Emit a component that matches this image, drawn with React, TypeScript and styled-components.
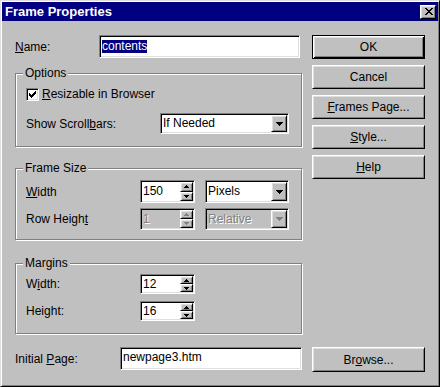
import React from "react";
import styled, { createGlobalStyle, css } from "styled-components";

const Global = createGlobalStyle`
  html, body { margin: 0; padding: 0; background: #c0c0c0; }
  body {
    font-family: "Liberation Sans", Arial, sans-serif;
    font-size: 12px;
    color: #000;
  }
  * { box-sizing: border-box; }
`;

const Window = styled.div`
  width: 440px;
  height: 387px;
  background: #c0c0c0;
  border: 1px solid;
  border-color: #dfdfdf #000 #000 #dfdfdf;
  box-shadow: inset 1px 1px #fff, inset -1px -1px #808080;
  padding: 1px;
  display: flex;
  flex-direction: column;
  overflow: hidden;
`;

const TitleBar = styled.div`
  flex: none;
  height: 19px;
  background: #000080;
  color: #fff;
  font-weight: bold;
  font-size: 13px;
  display: flex;
  align-items: center;
  justify-content: space-between;
  padding: 0 2px 0 3px;
`;

const raised = css`
  background: #c0c0c0;
  border: 1px solid;
  border-color: #fff #000 #000 #fff;
  box-shadow: inset 1px 1px #dfdfdf, inset -1px -1px #808080;
`;

const CloseButton = styled.div`
  ${raised};
  width: 16px;
  height: 14px;
  display: flex;
  align-items: center;
  justify-content: center;
  padding-left: 1px;
`;

const Body = styled.div`
  flex: none;
  display: grid;
  grid-template-columns: 287px 113px;
  column-gap: 10px;
  row-gap: 13px;
  align-items: start;
  padding: 14px 13px 0 13px;
`;

const LeftColumn = styled.div`
  display: flex;
  flex-direction: column;
`;

const ButtonColumn = styled.div`
  display: flex;
  flex-direction: column;
  gap: 6px;
`;

const Button = styled.button<{ $default?: boolean; $h?: number }>`
  ${raised};
  width: 113px;
  height: ${(p) => p.$h ?? 24}px;
  margin: 0;
  padding: 0;
  font: inherit;
  color: #000;
  ${(p) =>
    p.$default &&
    css`
      border-color: #000;
      box-shadow: inset 1px 1px #fff, inset -1px -1px #000,
        inset 2px 2px #dfdfdf, inset -2px -2px #808080;
    `}
`;

const U = styled.span`
  text-decoration: underline;
  text-underline-offset: 1px;
`;

const Row = styled.div<{ $h: number }>`
  display: flex;
  align-items: center;
  height: ${(p) => p.$h}px;
`;

const Label = styled.div<{ $w: number }>`
  width: ${(p) => p.$w}px;
  flex: none;
  white-space: nowrap;
`;

const GroupBox = styled.div<{ $top: number; $pb: number }>`
  margin-top: ${(p) => p.$top}px;
  border: 1px solid #808080;
  box-shadow: inset 1px 1px #fff, 1px 1px #fff;
  padding: 0 10px ${(p) => p.$pb}px 10px;
  display: flex;
  flex-direction: column;
`;

const Legend = styled.div`
  align-self: flex-start;
  margin: -8px 0 0 -3px;
  padding: 0 2px;
  line-height: 14px;
  height: 14px;
  background: #c0c0c0;
  white-space: nowrap;
`;

const GroupContent = styled.div<{ $pt: number; $gap: number }>`
  display: flex;
  flex-direction: column;
  gap: ${(p) => p.$gap}px;
  margin-top: ${(p) => p.$pt}px;
`;

const Field = styled.div<{ $w: number; $h: number; $disabled?: boolean }>`
  width: ${(p) => p.$w}px;
  height: ${(p) => p.$h}px;
  flex: none;
  display: flex;
  align-items: center;
  background: ${(p) => (p.$disabled ? "#c0c0c0" : "#fff")};
  color: ${(p) => (p.$disabled ? "#808080" : "#000")};
  text-shadow: ${(p) => (p.$disabled ? "1px 1px #fff" : "none")};
  border: 1px solid;
  border-color: #808080 #fff #fff #808080;
  box-shadow: inset 1px 1px #000, inset -1px -1px #dfdfdf;
  padding: 1px;
  white-space: nowrap;
`;

const FieldText = styled.span<{ $pb?: number }>`
  flex: 1;
  padding-left: 1px;
  padding-bottom: ${(p) => p.$pb ?? 1}px;
  line-height: 14px;
  overflow: hidden;
`;

const Selected = styled.span`
  background: #000080;
  color: #fff;
  line-height: 13px;
  display: inline-block;
`;

const DropButton = styled.div`
  ${raised};
  width: 16px;
  height: 100%;
  flex: none;
  display: flex;
  align-items: center;
  justify-content: center;
`;

const SpinColumn = styled.div`
  width: 13px;
  height: 100%;
  flex: none;
  display: flex;
  flex-direction: column;
`;

const SpinButton = styled.div`
  ${raised};
  flex: 1;
  display: flex;
  align-items: center;
  justify-content: center;
`;

const CheckBox = styled.div`
  width: 13px;
  height: 13px;
  flex: none;
  background: #fff;
  border: 1px solid;
  border-color: #808080 #fff #fff #808080;
  box-shadow: inset 1px 1px #000, inset -1px -1px #dfdfdf;
  display: flex;
  align-items: center;
  justify-content: center;
`;

const CheckLabel = styled.span`
  margin-left: 3px;
  white-space: nowrap;
`;

const Spacer = styled.div<{ $w: number }>`
  width: ${(p) => p.$w}px;
  flex: none;
`;

const Pixels = ({ rows, color }: { rows: string[]; color: string }) => (
  <svg
    width={rows[0].length}
    height={rows.length}
    shapeRendering="crispEdges"
    style={{ display: "block" }}
  >
    {rows.flatMap((r, y) =>
      r
        .split("")
        .map((c, x) =>
          c === "X" ? (
            <rect key={`${x}-${y}`} x={x} y={y} width={1} height={1} fill={color} />
          ) : null
        )
    )}
  </svg>
);

const CLOSE = [
  "XX....XX",
  ".XX..XX.",
  "..XXXX..",
  "...XX...",
  "..XXXX..",
  ".XX..XX.",
  "XX....XX",
];
const CHECK = [
  "......X",
  ".....XX",
  "X...XXX",
  "XX.XXX.",
  "XXXXX..",
  ".XXX...",
  "..X....",
];
const DOWN = ["XXXXXXX", ".XXXXX.", "..XXX..", "...X..."];
const SPIN_UP = ["..X..", ".XXX.", "XXXXX"];
const SPIN_DOWN = ["XXXXX", ".XXX.", "..X.."];

const Select = ({
  w,
  h,
  value,
  disabled,
}: {
  w: number;
  h: number;
  value: string;
  disabled?: boolean;
}) => (
  <Field $w={w} $h={h} $disabled={disabled}>
    <FieldText>{value}</FieldText>
    <DropButton>
      <Pixels rows={DOWN} color={disabled ? "#808080" : "#000"} />
    </DropButton>
  </Field>
);

const Spinner = ({
  h,
  value,
  disabled,
}: {
  h: number;
  value: string;
  disabled?: boolean;
}) => (
  <Field $w={55} $h={h} $disabled={disabled}>
    <FieldText>{value}</FieldText>
    <SpinColumn>
      <SpinButton>
        <Pixels rows={SPIN_UP} color={disabled ? "#808080" : "#000"} />
      </SpinButton>
      <SpinButton>
        <Pixels rows={SPIN_DOWN} color={disabled ? "#808080" : "#000"} />
      </SpinButton>
    </SpinColumn>
  </Field>
);

export default function App() {
  return (
    <>
      <Global />
      <Window>
        <TitleBar>
          <span>Frame Properties</span>
          <CloseButton>
            <Pixels rows={CLOSE} color="#000" />
          </CloseButton>
        </TitleBar>
        <Body>
          <LeftColumn>
            <Row $h={23}>
              <Label $w={84}>
                <U>N</U>ame:
              </Label>
              <Field $w={201} $h={23}>
                <FieldText $pb={2}>
                  <Selected>contents</Selected>
                </FieldText>
              </Field>
            </Row>

            <GroupBox $top={15} $pb={12}>
              <Legend>Options</Legend>
              <GroupContent $pt={6} $gap={11}>
                <Row $h={16}>
                  <CheckBox>
                    <Pixels rows={CHECK} color="#000" />
                  </CheckBox>
                  <CheckLabel>
                    <U>R</U>esizable in Browser
                  </CheckLabel>
                </Row>
                <Row $h={21}>
                  <Label $w={134}>
                    Show Scroll<U>b</U>ars:
                  </Label>
                  <Select w={129} h={21} value="If Needed" />
                </Row>
              </GroupContent>
            </GroupBox>

            <GroupBox $top={21} $pb={9}>
              <Legend>Frame Size</Legend>
              <GroupContent $pt={5} $gap={5}>
                <Row $h={23}>
                  <Label $w={114}>
                    <U>W</U>idth
                  </Label>
                  <Spinner h={23} value="150" />
                  <Spacer $w={10} />
                  <Select w={84} h={23} value="Pixels" />
                </Row>
                <Row $h={22}>
                  <Label $w={114}>
                    Row Heigh<U>t</U>
                  </Label>
                  <Spinner h={22} value="1" disabled />
                  <Spacer $w={10} />
                  <Select w={84} h={22} value="Relative" disabled />
                </Row>
              </GroupContent>
            </GroupBox>

            <GroupBox $top={23} $pb={12}>
              <Legend>Margins</Legend>
              <GroupContent $pt={4} $gap={7}>
                <Row $h={20}>
                  <Label $w={114}>
                    W<U>i</U>dth:
                  </Label>
                  <Spinner h={20} value="12" />
                </Row>
                <Row $h={20}>
                  <Label $w={114}>
                    Hei<U>g</U>ht:
                  </Label>
                  <Spinner h={20} value="16" />
                </Row>
              </GroupContent>
            </GroupBox>
          </LeftColumn>

          <ButtonColumn>
            <Button $default>OK</Button>
            <Button>Cancel</Button>
            <Button>
              <U>F</U>rames Page...
            </Button>
            <Button>
              <U>S</U>tyle...
            </Button>
            <Button>
              <U>H</U>elp
            </Button>
          </ButtonColumn>

          <Row $h={23}>
            <Label $w={105}>
              Initial <U>P</U>age:
            </Label>
            <Field $w={182} $h={23}>
              <FieldText $pb={3}>newpage3.htm</FieldText>
            </Field>
          </Row>
          <Button $h={25}>
            Br<U>o</U>wse...
          </Button>
        </Body>
      </Window>
    </>
  );
}
